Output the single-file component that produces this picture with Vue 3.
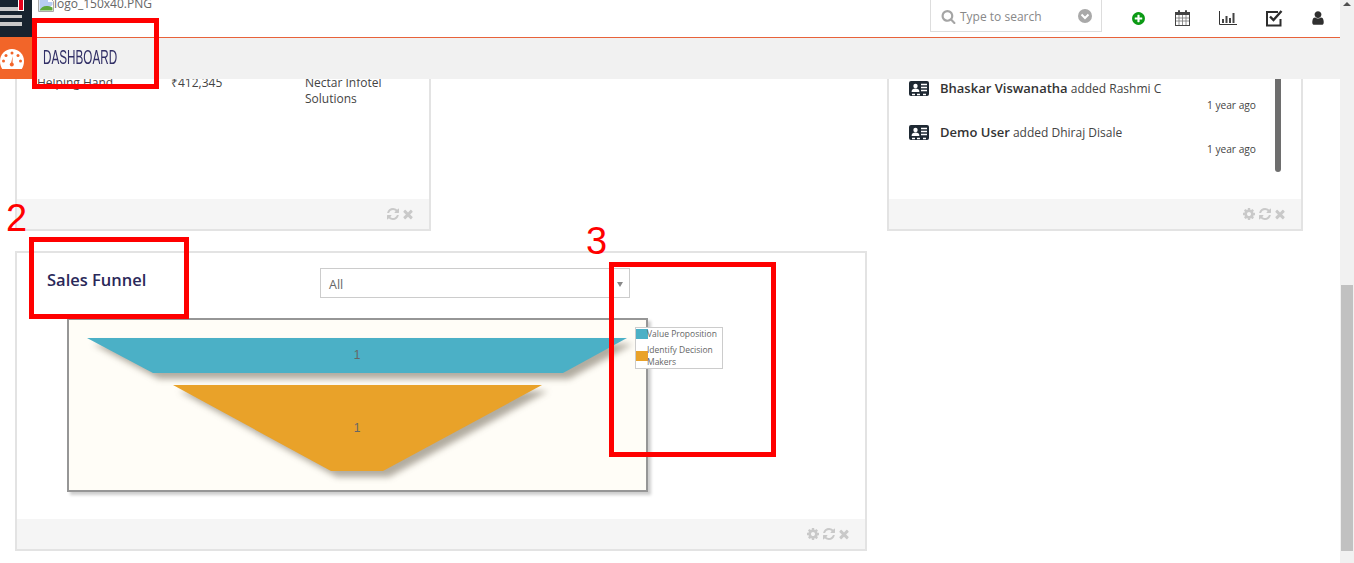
<template>
  <div class="page">
    <div class="content">
      <div class="top-row">
        <!-- Oportunidades -->
        <section class="card">
          <div class="card-body deals">
            <span>Helping Hand</span>
            <span>₹412,345</span>
            <span>Nectar Infotel Solutions</span>
          </div>
          <div class="card-foot">
            <svg v-for="k in ['refresh', 'close']" :key="k" class="foot-icon" viewBox="0 0 1792 1792"><path :d="fa[k]" /></svg>
          </div>
        </section>

        <!-- Actividad -->
        <section class="card">
          <div class="card-body feed">
            <div v-for="a in actividad" :key="a.nombre" class="feed-item">
              <div class="feed-line">
                <svg class="contact-icon" viewBox="0 0 20 15">
                  <path d="M2 0h16a2 2 0 0 1 2 2v11a2 2 0 0 1-2 2H2a2 2 0 0 1-2-2V2a2 2 0 0 1 2-2z" fill="#1f2933" />
                  <circle cx="6.5" cy="5" r="2.2" fill="#fff" />
                  <path d="M2.6 11c0-2.4 1.6-3.4 3.9-3.4s3.9 1 3.9 3.4z" fill="#fff" />
                  <path d="M12 3.500h6M12 6.500h6M12 9.500h6M3 13.500h3M8 13.500h3M14 13.500h3" stroke="#fff" stroke-width="1.300" />
                </svg>
                <span><strong>{{ a.nombre }}</strong> added {{ a.objeto }}</span>
              </div>
              <div class="feed-time">1 year ago</div>
            </div>
            <div class="feed-scroll"></div>
          </div>
          <div class="card-foot">
            <svg v-for="k in ['cog', 'refresh', 'close']" :key="k" class="foot-icon" viewBox="0 0 1792 1792"><path :d="fa[k]" /></svg>
          </div>
        </section>
      </div>

      <!-- Sales Funnel -->
      <section class="card funnel-card">
        <div class="funnel-head">
          <h3 class="funnel-title">Sales Funnel</h3>
          <div class="select-box">
            <span>All</span>
            <i class="select-arrow"></i>
          </div>
        </div>
        <div class="chart">
          <svg class="chart-svg" viewBox="0 0 577 170">
            <g class="funnel-shapes">
              <polygon points="18,18 558,18 494,53 84,53" fill="#4bb0c6" />
              <polygon points="104,65 473,65 314,151 262,151" fill="#e9a229" />
            </g>
            <text x="288" y="39" class="chart-num">1</text>
            <text x="288" y="112" class="chart-num">1</text>
          </svg>
          <div class="legend">
            <div class="legend-row">
              <i class="swatch teal"></i>
              <span>Value Proposition</span>
            </div>
            <div class="legend-row">
              <i class="swatch orange"></i>
              <span>Identify Decision Makers</span>
            </div>
          </div>
        </div>
        <div class="card-foot funnel-foot">
          <svg v-for="k in ['cog', 'refresh', 'close']" :key="k" class="foot-icon" viewBox="0 0 1792 1792"><path :d="fa[k]" /></svg>
        </div>
      </section>
    </div>

    <!-- Cabecera fija -->
    <header class="header">
      <div class="rail">
        <div class="rail-top">
          <i></i><i></i><i></i>
        </div>
        <div class="rail-bottom">
          <svg class="gauge" viewBox="0 0 24 20">
            <path d="M12 0C5.400 0 0 5.400 0 12c0 3 .8 5.700 2.200 8h19.600C23.200 17.700 24 15 24 12 24 5.400 18.600 0 12 0z" fill="#fff" />
            <circle cx="12" cy="4" r="1.500" fill="#f26529" />
            <circle cx="6" cy="6.500" r="1.500" fill="#f26529" />
            <circle cx="18" cy="6.500" r="1.500" fill="#f26529" />
            <circle cx="3.500" cy="12" r="1.500" fill="#f26529" />
            <circle cx="20.500" cy="12" r="1.500" fill="#f26529" />
            <path d="M12.700 7l-.2 7.500h-1.500z" fill="#f26529" />
            <circle cx="11.800" cy="15.500" r="2" fill="#f26529" />
          </svg>
        </div>
      </div>
      <div class="head-main">
        <div class="topbar">
          <div class="logo">
            <svg class="broken-img" viewBox="0 0 16 16">
              <path d="M.5.500h10l5 5v10H.500z" fill="#fff" stroke="#a9a9a9" />
              <path d="M1.500 1.500h8.500v4.500h4.500v3L9 13l-7.500 1.500z" fill="#b7cdf2" />
              <path d="M1.500 14.500c2-4 6-6 13-3v3z" fill="#5fa83c" />
            </svg>
            <span>logo_150x40.PNG</span>
          </div>
          <div class="search">
            <svg class="search-icon" viewBox="0 0 1792 1792"><path :d="fa.search" /></svg>
            <span class="search-text">Type to search</span>
            <svg class="search-chevron" viewBox="0 0 14 14">
              <circle cx="7" cy="7" r="7" fill="#a9a9a9" />
              <path d="M3.500 5.500L7 9l3.500-3.500" fill="none" stroke="#fff" stroke-width="2" />
            </svg>
          </div>
          <nav class="tools">
            <svg class="tool plus" viewBox="0 0 1792 1792"><path :d="fa.plus" /></svg>
            <svg class="tool calendar" viewBox="0 0 15 16">
              <rect x=".5" y="2.500" width="14" height="13" fill="#fff" stroke="#444" />
              <rect x="1" y="2" width="13" height="3" fill="#444" />
              <rect x="3" y="0" width="2" height="4" rx="1" fill="#444" />
              <rect x="10" y="0" width="2" height="4" rx="1" fill="#444" />
              <path d="M4 5v10M7.500 5v10M11 5v10M1 8h13M1 11h13" stroke="#777" stroke-width=".8" />
            </svg>
            <svg class="tool bars" viewBox="0 0 18 14">
              <path d="M.5 0v13.500H18" fill="none" stroke="#333" />
              <path d="M3 8h2v4H3zM6.500 5h2v7h-2zM10 7h2v5h-2zM13.500 2h2v10h-2z" fill="#444" />
            </svg>
            <svg class="tool check" viewBox="0 0 18 17">
              <path d="M14.500 9v6.500h-13.500v-13.500h11" fill="none" stroke="#2d2d2d" stroke-width="2" />
              <path d="M4 6.500l3.500 3.500L15.500 1" fill="none" stroke="#2d2d2d" stroke-width="2.400" />
            </svg>
            <svg class="tool user" viewBox="0 0 1792 1792"><path :d="fa.user" /></svg>
          </nav>
        </div>
        <div class="subbar"><span class="subbar-text">DASHBOARD</span></div>
      </div>
    </header>

    <!-- Barra de scroll -->
    <div class="scrollbar">
      <i class="scroll-up"></i>
      <div class="scroll-thumb"></div>
    </div>

    <!-- Anotaciones de la captura -->
    <div class="mark mark-one"></div>
    <div class="box box-dash"></div>
    <div class="box box-title"></div>
    <div class="box box-legend"></div>
    <span class="num num-two">2</span>
    <span class="num num-three">3</span>
  </div>
</template>

<script setup>
const actividad = [
  { nombre: 'Bhaskar Viswanatha', objeto: 'Rashmi C' },
  { nombre: 'Demo User', objeto: 'Dhiraj Disale' }
]

const fa = {
  refresh: 'M1639 1056q0 5-1 7-64 268-268 434.5t-478 166.5q-146 0-282.5-55t-243.5-157l-129 129q-19 19-45 19t-45-19-19-45v-448q0-26 19-45t45-19h448q26 0 45 19t19 45-19 45l-137 137q71 66 161 102t187 36q134 0 250-65t186-179q11-17 53-117 8-23 30-23h192q13 0 22.5 9.5t9.5 22.5zm25-800v448q0 26-19 45t-45 19h-448q-26 0-45-19t-19-45 19-45l138-138q-148-137-349-137-134 0-250 65t-186 179q-11 17-53 117-8 23-30 23h-199q-13 0-22.5-9.5t-9.5-22.5v-7q65-268 270-434.5t480-166.5q146 0 284 55.5t245 156.5l130-129q19-19 45-19t45 19 19 45z',
  cog: 'M1152 896q0-106-75-181t-181-75-181 75-75 181 75 181 181 75 181-75 75-181zm512-109v222q0 12-8 23t-20 13l-185 28q-19 54-39 91 35 50 107 138 10 12 10 25t-9 23q-27 37-99 108t-94 71q-12 0-26-9l-138-108q-44 23-91 38-16 136-29 186-7 28-36 28h-222q-14 0-24.5-8.5t-11.5-21.5l-28-184q-49-16-90-37l-141 107q-10 9-25 9-14 0-25-11-126-114-165-168-7-10-7-23 0-12 8-23 15-21 51-66.5t54-70.5q-27-50-41-99l-183-27q-13-2-21-12.5t-8-23.5v-222q0-12 8-23t19-13l186-28q14-46 39-92-40-57-107-138-10-12-10-24 0-10 9-23 26-36 98.5-107.5t94.5-71.5q13 0 26 10l138 107q44-23 91-38 16-136 29-186 7-28 36-28h222q14 0 24.5 8.5t11.5 21.5l28 184q49 16 90 37l142-107q9-9 24-9 13 0 25 10 129 119 165 170 7 8 7 22 0 12-8 23-15 21-51 66.5t-54 70.5q26 50 41 98l183 28q13 2 21 12.5t8 23.5z',
  close: 'M1490 1322q0 40-28 68l-136 136q-28 28-68 28t-68-28l-294-294-294 294q-28 28-68 28t-68-28l-136-136q-28-28-28-68t28-68l294-294-294-294q-28-28-28-68t28-68l136-136q28-28 68-28t68 28l294 294 294-294q28-28 68-28t68 28l136 136q28 28 28 68t-28 68l-294 294 294 294q28 28 28 68z',
  search: 'M1216 832q0-185-131.5-316.5t-316.5-131.5-316.5 131.5-131.5 316.5 131.5 316.5 316.5 131.5 316.5-131.5 131.5-316.5zm512 832q0 52-38 90t-90 38q-54 0-90-38l-343-342q-179 124-399 124-143 0-273.5-55.5t-225-150-150-225-55.5-273.5 55.5-273.5 150-225 225-150 273.5-55.5 273.5 55.5 225 150 150 225 55.5 273.5q0 220-124 399l343 343q37 37 37 90z',
  plus: 'M1344 960v-128q0-26-19-45t-45-19h-256v-256q0-26-19-45t-45-19h-128q-26 0-45 19t-19 45v256h-256q-26 0-45 19t-19 45v128q0 26 19 45t45 19h256v256q0 26 19 45t45 19h128q26 0 45-19t19-45v-256h256q26 0 45-19t19-45zm320-64q0 209-103 385.5t-279.5 279.5-385.5 103-385.5-103-279.5-279.5-103-385.5 103-385.5 279.5-279.5 385.5-103 385.5 103 279.5 279.5 103 385.5z',
  user: 'M1536 1399q0 109-62.5 187t-150.5 78h-854q-88 0-150.5-78t-62.5-187q0-85 8.5-160.5t31.5-152 58.5-131 94-89 134.5-34.5q131 128 313 128t313-128q76 0 134.5 34.5t94 89 58.5 131 31.5 152 8.5 160.5zm-256-887q0 159-112.5 271.5t-271.5 112.5-271.5-112.5-112.5-271.5 112.5-271.5 271.5-112.5 271.5 112.5 112.5 271.5z'
}
</script>

<style scoped>
.page { position: relative; width: 1354px; height: 563px; overflow: hidden; background: #fff; font-family: "Open Sans", sans-serif; color: #444; }

.content { padding-left: 15px; width: 1288px; }
.top-row { display: grid; grid-template-columns: 416px 416px; justify-content: space-between; height: 231px; }

.card { display: flex; flex-direction: column; border: 2px solid #e3e3e3; box-sizing: border-box; background: #fff; }
.card-body { flex: 1; position: relative; }
.card-foot { height: 30px; flex: none; background: #f5f5f5; display: flex; align-items: center; justify-content: flex-end; gap: 1.5px; padding-right: 14px; }
.foot-icon { width: 14px; height: 14px; fill: #c9c9c9; }

.deals { display: grid; grid-template-columns: 134px 134px 110px; align-content: start; padding: 73px 0 0 20px; font-size: 12px; line-height: 16px; color: #444; }

.feed { padding: 77px 0 0 20px; font-size: 12px; }
.feed-item { height: 44px; width: 347px; }
.feed-line { display: flex; align-items: center; gap: 11px; height: 18px; line-height: 18px; }
.feed-line strong { font-weight: 600; font-size: 13px; color: #333; }
.contact-icon { width: 20px; height: 15px; flex: none; }
.feed-time { text-align: right; font-size: 10.2px; line-height: 16px; color: #444; }
.feed-scroll { position: absolute; left: 386px; top: 60px; width: 6px; height: 110px; background: #6e6e6e; border-radius: 0 0 3px 3px; }

.funnel-card { margin-top: 20px; width: 852px; height: 300px; }
.funnel-head { display: flex; height: 45px; padding-top: 15px; box-sizing: border-box; padding-left: 30px; }
.funnel-title { margin: 0; width: 273px; font-size: 16.5px; font-weight: 600; line-height: 24px; color: #2a2859; }
.select-box { width: 310px; height: 30px; box-sizing: border-box; border: 1px solid #ccc; display: flex; align-items: center; justify-content: space-between; padding: 2px 5px 0 8px; font-size: 12.5px; color: #666; }
.select-arrow { width: 0; height: 0; border-left: 3.5px solid transparent; border-right: 3.5px solid transparent; border-top: 5px solid #888; margin-right: 1px; }

.chart { position: relative; margin: 20px 0 27px 50px; width: 581px; height: 174px; box-sizing: border-box; border: 2px solid #969696; background: #fffdf7; box-shadow: 3px 3px 3px rgba(0, 0, 0, 0.2); }
.chart-svg { display: block; width: 577px; height: 170px; }
.funnel-shapes { filter: drop-shadow(6px 6px 3px rgba(60, 50, 30, 0.4)); }
.chart-num { font-family: "Liberation Sans", sans-serif; font-size: 12px; fill: #666; text-anchor: middle; }

.legend { position: absolute; left: 566px; top: 7px; width: 88px; height: 42px; box-sizing: border-box; border: 1px solid #ccc; background: #fff; font-size: 8.5px; line-height: 12px; color: #666; }
.legend-row { display: flex; align-items: center; margin-bottom: 4px; }
.legend-row span { margin-left: -1px; }
.swatch { width: 12px; height: 10px; flex: none; }
.teal { background: #4bb0c6; }
.orange { background: #e9a229; }

.header { position: absolute; left: 0; top: 0; width: 1340px; height: 79px; display: flex; }
.rail { width: 32px; flex: none; display: flex; flex-direction: column; }
.rail-top { height: 37px; background: #17232f; display: flex; flex-direction: column; gap: 4px; padding-top: 7px; box-sizing: border-box; }
.rail-top i { display: block; width: 22px; height: 3.500px; background: #c9c9c9; }
.rail-bottom { flex: 1; background: #f26529; padding: 12px 0 0 0; box-sizing: border-box; }
.gauge { display: block; width: 24px; height: 20px; }

.head-main { flex: 1; display: flex; flex-direction: column; min-width: 0; }
.topbar { height: 38px; box-sizing: border-box; background: #fff; border-bottom: 1px solid #e8623a; display: flex; }
.logo { width: 898px; flex: none; display: flex; align-items: flex-start; padding-left: 6px; box-sizing: border-box; margin-top: -4px; font-size: 12px; line-height: 16px; color: #666; }
.broken-img { width: 16px; height: 16px; flex: none; }
.search { width: 172px; height: 33px; box-sizing: border-box; margin-top: -1px; padding: 1px 9px 0 10px; border: 1px solid #ddd; display: flex; align-items: center; }
.search-icon { width: 15px; height: 15px; fill: #a5a5a5; flex: none; }
.search-text { margin-left: 4px; font-size: 12px; color: #888; flex: 1; }
.search-chevron { width: 14px; height: 14px; flex: none; }
.tools { display: flex; align-items: center; padding-left: 29px; height: 36px; }
.tool { flex: none; display: block; }
.plus { width: 15px; height: 15px; fill: #0b9a14; }
.calendar { width: 15px; height: 16px; margin-left: 29px; }
.bars { width: 18px; height: 14px; margin-left: 29px; }
.check { width: 18px; height: 17px; margin-left: 29px; }
.user { width: 16px; height: 16px; margin-left: 26px; fill: #2f2f2f; }
.subbar { flex: 1; background: #f1f1f1; padding: 0 0 2px 11px; display: flex; align-items: center; font-family: "Liberation Sans", sans-serif; font-size: 20px; color: #312f66; }
.subbar-text { display: block; transform: scaleX(0.585); transform-origin: left center; }

.scrollbar { position: absolute; right: 0; top: 0; width: 14px; height: 563px; background: #f1f1f1; }
.scroll-up { position: absolute; left: 3px; top: 2px; width: 0; height: 0; border-left: 4px solid transparent; border-right: 4px solid transparent; border-bottom: 4px solid #505050; }
.scroll-thumb { position: absolute; left: 1px; top: 285px; width: 12px; height: 266px; background: #c1c1c1; }

.box { position: absolute; box-sizing: border-box; border: 5px solid #f00; }
.box-dash { left: 32px; top: 18px; width: 127px; height: 71px; }
.box-title { left: 29px; top: 237px; width: 160px; height: 82px; }
.box-legend { left: 609px; top: 262px; width: 167px; height: 195px; }
.mark-one { position: absolute; left: 18px; top: 0; width: 6px; height: 11px; box-sizing: border-box; background: #e8001c; border: 1px solid #fff; border-top: 0; }
.num { position: absolute; font-family: "Liberation Sans", sans-serif; font-size: 38px; line-height: 38px; color: #f00; }
.num-two { left: 6px; top: 199px; }
.num-three { left: 586px; top: 222px; }
</style>

<style>
html, body { margin: 0; overflow: hidden; }
</style>
